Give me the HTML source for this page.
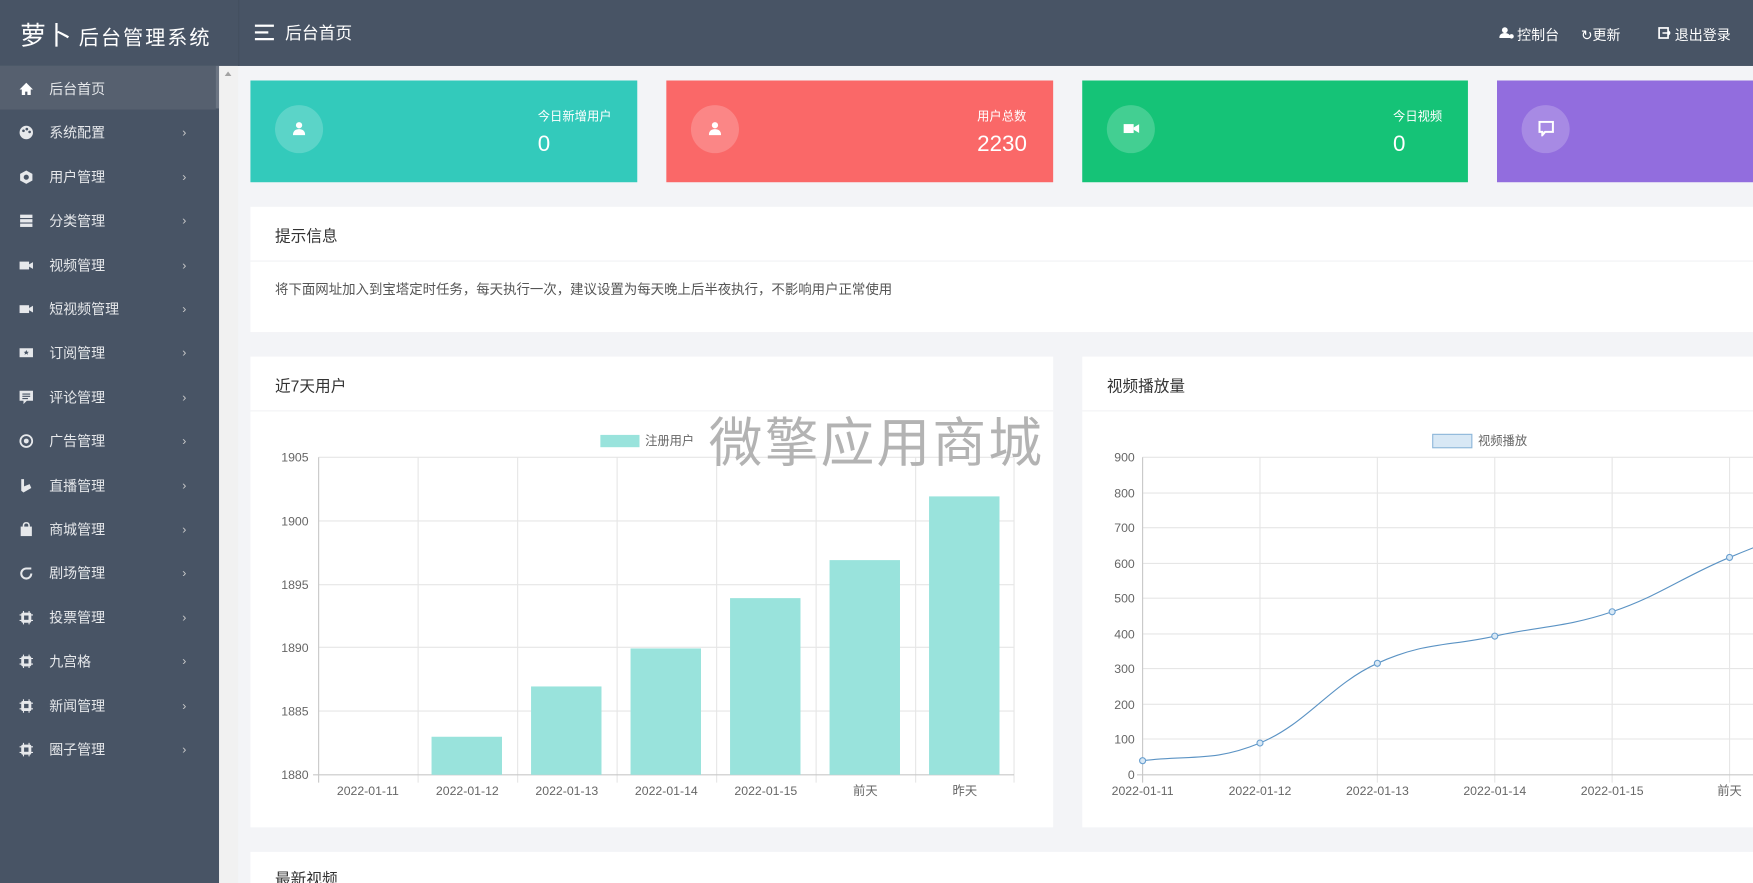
<!DOCTYPE html>
<html><head><meta charset="utf-8">
<style>
*{margin:0;padding:0;box-sizing:border-box}
html,body{width:1753px;height:883px;overflow:hidden;background:#f3f4f7}
#w{position:absolute;left:0;top:0;width:1568px;height:790px;transform:scale(1.118);transform-origin:0 0;font-family:"Liberation Sans","Noto Sans CJK SC",sans-serif;overflow:hidden;background:#f3f4f7}
.abs{position:absolute}
#hdr{left:0;top:0;width:1568px;height:59px;background:#485465;color:#fff}
#side{left:0;top:59px;width:196px;height:731px;background:#485465}
.it{position:absolute;left:0;width:193px;height:39px;color:#e6e8eb;font-size:12.5px;line-height:43px}
.it .t{position:absolute;left:44px}
.it .ic{position:absolute;left:17px;top:14px;width:13px;height:13px}
.it .ar{position:absolute;left:163px;font-size:11px;color:#ccc}
.card{top:72px;height:91px;color:#fff}
.circ{position:absolute;left:22px;top:22px;width:43px;height:43px;border-radius:50%;background:rgba(255,255,255,.2)}
.lab{position:absolute;top:24px;font-size:11px}
.num{position:absolute;top:46px;font-size:20px}
.panel{background:#fff}
.ptitle{position:absolute;left:22px;top:16px;font-size:14px;color:#333}
.div{position:absolute;left:0;right:0;height:1px;background:#f1f2f4}
</style></head><body><div id="w">
<div id="hdr" class="abs">
 <div class="abs" style="left:213px;top:0;width:1px;height:59px;background:#44505f"></div>
 <div class="abs" style="left:18px;top:13px;font-size:23px">萝卜 <span style="font-size:18px;letter-spacing:1.8px">后台管理系统</span></div>
 <div class="abs" style="left:228px;top:22px;width:17px;height:2px;background:#fff"></div>
 <div class="abs" style="left:228px;top:28px;width:12px;height:2px;background:#fff"></div>
 <div class="abs" style="left:228px;top:34px;width:17px;height:2px;background:#fff"></div>
 <div class="abs" style="left:255px;top:19px;font-size:15px">后台首页</div>
 <svg class="abs" style="left:1341px;top:24px" width="14" height="11" viewBox="0 0 14 11"><circle cx="5" cy="3" r="2.6" fill="#fff"/><path d="M0 10c0-3 2-4.5 5-4.5s5 1.5 5 4.5z" fill="#fff"/><circle cx="11" cy="8.5" r="2" fill="#fff"/></svg>
 <div class="abs" style="left:1357px;top:21px;font-size:12.5px">控制台</div>
 <div class="abs" style="left:1414px;top:21px;font-size:12.5px">↻更新</div>
 <svg class="abs" style="left:1483px;top:24px" width="11" height="11" viewBox="0 0 11 11"><rect x="1" y="1" width="8" height="9" fill="none" stroke="#fff" stroke-width="1.5"/><path d="M4 5.5h7M9 3.5l2 2-2 2" stroke="#fff" stroke-width="1.3" fill="none"/></svg>
 <div class="abs" style="left:1498px;top:21px;font-size:12.5px">退出登录</div>
</div>
<div id="side" class="abs">
 <div class="it" style="top:0;background:#56606f"><svg class="ic" viewBox="0 0 13 13"><path d="M6.5 1L0.5 7h2v5h3V9h2v3h3V7h2z" fill="#fff"/></svg><span class="t">后台首页</span></div>
 <div class="abs" style="left:193px;top:0;width:3px;height:38px;background:#6b7482"></div>
 <div class="it" style="top:39.4px"><svg class="ic" viewBox="0 0 13 13"><circle cx="6.5" cy="6.5" r="6" fill="#e6e8eb"/><circle cx="4" cy="5" r="1.2" fill="#485465"/><circle cx="7" cy="3.5" r="1.2" fill="#485465"/><circle cx="9.5" cy="6" r="1.2" fill="#485465"/></svg><span class="t">系统配置</span><span class="ar">›</span></div>
 <div class="it" style="top:78.8px"><svg class="ic" viewBox="0 0 13 13"><path d="M6.5 0.5l5.5 3v6l-5.5 3-5.5-3v-6z" fill="#e6e8eb"/><circle cx="6.5" cy="6.5" r="2.3" fill="#485465"/></svg><span class="t">用户管理</span><span class="ar">›</span></div>
 <div class="it" style="top:118.2px"><svg class="ic" viewBox="0 0 13 13"><rect x="1" y="1" width="11" height="3" fill="#e6e8eb"/><rect x="1" y="5" width="11" height="3" fill="#e6e8eb"/><rect x="1" y="9" width="11" height="3" fill="#e6e8eb"/></svg><span class="t">分类管理</span><span class="ar">›</span></div>
 <div class="it" style="top:157.6px"><svg class="ic" viewBox="0 0 13 13"><rect x="0.5" y="3" width="8.5" height="7" fill="#e6e8eb"/><path d="M9 5.5l3.5-2v6L9 7.5z" fill="#e6e8eb"/></svg><span class="t">视频管理</span><span class="ar">›</span></div>
 <div class="it" style="top:197px"><svg class="ic" viewBox="0 0 13 13"><rect x="0.5" y="3" width="8.5" height="7" fill="#e6e8eb"/><path d="M9 5.5l3.5-2v6L9 7.5z" fill="#e6e8eb"/></svg><span class="t">短视频管理</span><span class="ar">›</span></div>
 <div class="it" style="top:236.4px"><svg class="ic" viewBox="0 0 13 13"><rect x="0.5" y="2.5" width="12" height="8" fill="#e6e8eb"/><path d="M6.5 4l.7 1.6 1.6.1-1.2 1 .4 1.6-1.5-.9-1.5.9.4-1.6-1.2-1 1.6-.1z" fill="#485465"/></svg><span class="t">订阅管理</span><span class="ar">›</span></div>
 <div class="it" style="top:275.8px"><svg class="ic" viewBox="0 0 13 13"><path d="M0.5 0.5h12v9H7l-3 3v-3H0.5z" fill="#e6e8eb"/><path d="M3 3.5h7M3 5.5h7M3 7.5h5" stroke="#485465" stroke-width="1"/></svg><span class="t">评论管理</span><span class="ar">›</span></div>
 <div class="it" style="top:315.2px"><svg class="ic" viewBox="0 0 13 13"><circle cx="6.5" cy="6.5" r="5.3" fill="none" stroke="#e6e8eb" stroke-width="1.6"/><circle cx="6.5" cy="6.5" r="2.2" fill="#e6e8eb"/></svg><span class="t">广告管理</span><span class="ar">›</span></div>
 <div class="it" style="top:354.6px"><svg class="ic" viewBox="0 0 13 13"><path d="M2 0.5h2.5v6.5l5-2 1.5 3.5L4 12.5 2 11z" fill="#e6e8eb"/></svg><span class="t">直播管理</span><span class="ar">›</span></div>
 <div class="it" style="top:394px"><svg class="ic" viewBox="0 0 13 13"><rect x="1.5" y="4" width="10" height="8.5" fill="#e6e8eb"/><path d="M4 5V3a2.5 2.5 0 015 0v2" fill="none" stroke="#e6e8eb" stroke-width="1.4"/></svg><span class="t">商城管理</span><span class="ar">›</span></div>
 <div class="it" style="top:433.4px"><svg class="ic" viewBox="0 0 13 13"><path d="M11 2.5H6.5a4.5 4.5 0 104.5 4.5" fill="none" stroke="#e6e8eb" stroke-width="1.8"/></svg><span class="t">剧场管理</span><span class="ar">›</span></div>
 <div class="it" style="top:472.8px"><svg class="ic" viewBox="0 0 13 13"><rect x="2" y="2" width="9" height="9" rx="1.5" fill="#e6e8eb"/><rect x="4.5" y="4.5" width="4" height="4" fill="#485465"/><path d="M4 0.5v12M9 0.5v12M0.5 4h12M0.5 9h12" stroke="#e6e8eb" stroke-width="1"/></svg><span class="t">投票管理</span><span class="ar">›</span></div>
 <div class="it" style="top:512.2px"><svg class="ic" viewBox="0 0 13 13"><rect x="2" y="2" width="9" height="9" rx="1.5" fill="#e6e8eb"/><rect x="4.5" y="4.5" width="4" height="4" fill="#485465"/><path d="M4 0.5v12M9 0.5v12M0.5 4h12M0.5 9h12" stroke="#e6e8eb" stroke-width="1"/></svg><span class="t">九宫格</span><span class="ar">›</span></div>
 <div class="it" style="top:551.6px"><svg class="ic" viewBox="0 0 13 13"><rect x="2" y="2" width="9" height="9" rx="1.5" fill="#e6e8eb"/><rect x="4.5" y="4.5" width="4" height="4" fill="#485465"/><path d="M4 0.5v12M9 0.5v12M0.5 4h12M0.5 9h12" stroke="#e6e8eb" stroke-width="1"/></svg><span class="t">新闻管理</span><span class="ar">›</span></div>
 <div class="it" style="top:591px"><svg class="ic" viewBox="0 0 13 13"><rect x="2" y="2" width="9" height="9" rx="1.5" fill="#e6e8eb"/><rect x="4.5" y="4.5" width="4" height="4" fill="#485465"/><path d="M4 0.5v12M9 0.5v12M0.5 4h12M0.5 9h12" stroke="#e6e8eb" stroke-width="1"/></svg><span class="t">圈子管理</span><span class="ar">›</span></div>
</div>
<div class="abs" style="left:196px;top:59px;width:17px;height:731px;background:#f1f1f1"></div>
<div class="abs" style="left:201px;top:64px;width:0;height:0;border-left:3px solid transparent;border-right:3px solid transparent;border-bottom:4px solid #a3a3a3"></div>

<div class="abs card" style="left:224px;width:346px;background:#33cabb"><div class="circ"></div><svg class="abs" style="left:38px;top:37px" width="11" height="12" viewBox="0 0 11 12"><circle cx="5.5" cy="3" r="2.8" fill="#fff"/><path d="M0 12c0-4 2.5-5.5 5.5-5.5S11 8 11 12z" fill="#fff"/></svg><div class="lab" style="left:257px">今日新增用户</div><div class="num" style="left:257px">0</div></div>
<div class="abs card" style="left:596px;width:346px;background:#fa6868"><div class="circ"></div><svg class="abs" style="left:38px;top:37px" width="11" height="12" viewBox="0 0 11 12"><circle cx="5.5" cy="3" r="2.8" fill="#fff"/><path d="M0 12c0-4 2.5-5.5 5.5-5.5S11 8 11 12z" fill="#fff"/></svg><div class="lab" style="left:278px">用户总数</div><div class="num" style="left:278px">2230</div></div>
<div class="abs card" style="left:968px;width:345px;background:#15c377"><div class="circ"></div><svg class="abs" style="left:37px;top:38px" width="14" height="10" viewBox="0 0 14 10"><rect x="0" y="1" width="9" height="8" fill="#fff"/><path d="M9 4l5-3v8L9 6z" fill="#fff"/></svg><div class="lab" style="left:278px">今日视频</div><div class="num" style="left:278px">0</div></div>
<div class="abs card" style="left:1339px;width:240px;background:#926dde"><div class="circ"></div><svg class="abs" style="left:37px;top:36px" width="14" height="14" viewBox="0 0 14 14"><path d="M1 1h12v9H6l-2.5 3V10H1z" fill="none" stroke="#fff" stroke-width="1.8"/></svg></div>

<div class="abs panel" style="left:224px;top:185px;width:1360px;height:112px"><div class="ptitle">提示信息</div><div class="div" style="top:48px"></div><div class="abs" style="left:22px;top:65px;font-size:12px;color:#555">将下面网址加入到宝塔定时任务，每天执行一次，建议设置为每天晚上后半夜执行，不影响用户正常使用</div></div>

<div class="abs panel" style="left:224px;top:319px;width:718px;height:421px"><div class="ptitle">近7天用户</div><div class="div" style="top:48px"></div></div>
<div class="abs panel" style="left:968px;top:319px;width:620px;height:421px"><div class="ptitle">视频播放量</div><div class="div" style="top:48px"></div></div>
<div class="abs panel" style="left:224px;top:762px;width:1360px;height:40px"><div class="ptitle" style="top:14px">最新视频</div></div>

<svg class="abs" style="left:0;top:0" width="1568" height="790" font-family="Liberation Sans, Noto Sans CJK SC, sans-serif" font-size="11" fill="#666">
 <g stroke="#e6e6e6" stroke-width="1">
  <path d="M285 409H907M285 466H907M285 523H907M285 579H907M285 636H907"/>
  <path d="M374 409V700M463 409V700M552 409V700M641 409V700M730 409V700M819 409V700M907 409V700"/>
 </g>
 <path d="M285 409V700M280 693H907" stroke="#c8c8c8"/>
 <g text-anchor="end"><text x="276" y="413">1905</text><text x="276" y="470">1900</text><text x="276" y="527">1895</text><text x="276" y="583">1890</text><text x="276" y="640">1885</text><text x="276" y="697">1880</text></g>
 <g fill="#99e3dc"><rect x="386" y="659" width="63" height="34"/><rect x="475" y="614" width="63" height="79"/><rect x="564" y="580" width="63" height="113"/><rect x="653" y="535" width="63" height="158"/><rect x="742" y="501" width="63" height="192"/><rect x="831" y="444" width="63" height="249"/></g>
 <rect x="537" y="389" width="35" height="11" fill="#99e3dc"/><text x="577" y="398">注册用户</text>
 <g text-anchor="middle"><text x="329" y="711">2022-01-11</text><text x="418" y="711">2022-01-12</text><text x="507" y="711">2022-01-13</text><text x="596" y="711">2022-01-14</text><text x="685" y="711">2022-01-15</text><text x="774" y="711">前天</text><text x="863" y="711">昨天</text></g>

 <g stroke="#e6e6e6">
  <path d="M1022 409H1568M1022 441H1568M1022 472H1568M1022 504H1568M1022 535H1568M1022 567H1568M1022 598H1568M1022 630H1568M1022 661H1568"/>
  <path d="M1127 409V700M1232 409V700M1337 409V700M1442 409V700M1547 409V700"/>
 </g>
 <path d="M1022 409V700M1017 693H1568" stroke="#c8c8c8"/>
 <g text-anchor="end"><text x="1015" y="413">900</text><text x="1015" y="445">800</text><text x="1015" y="476">700</text><text x="1015" y="508">600</text><text x="1015" y="539">500</text><text x="1015" y="571">400</text><text x="1015" y="602">300</text><text x="1015" y="634">200</text><text x="1015" y="665">100</text><text x="1015" y="697">0</text></g>
 <path d="M1022 680.4C1064 675 1085 682 1127 664.6C1169 647.2 1190 612.4 1232 593.3C1274 574.2 1295 578.2 1337 569C1379 559.8 1400 561.3 1442 547.2C1484 533.1 1505 516 1547 498.6C1589 481 1610 475 1652 460" fill="none" stroke="#5b93c4" stroke-width="1"/>
 <g fill="#d8e8f5" stroke="#6aa0d0"><circle cx="1022" cy="680.4" r="2.7"/><circle cx="1127" cy="664.6" r="2.7"/><circle cx="1232" cy="593.3" r="2.7"/><circle cx="1337" cy="569" r="2.7"/><circle cx="1442" cy="547.2" r="2.7"/><circle cx="1547" cy="498.6" r="2.7"/></g>
 <rect x="1281.5" y="388.5" width="35" height="12" fill="#d8e8f5" stroke="#8cb6d9"/><text x="1322" y="398">视频播放</text>
 <g text-anchor="middle"><text x="1022" y="711">2022-01-11</text><text x="1127" y="711">2022-01-12</text><text x="1232" y="711">2022-01-13</text><text x="1337" y="711">2022-01-14</text><text x="1442" y="711">2022-01-15</text><text x="1547" y="711">前天</text></g>
 <text x="634" y="413" font-size="48" fill="#b3b3b3" letter-spacing="2">微擎应用商城</text>
</svg>
</div></body></html>
